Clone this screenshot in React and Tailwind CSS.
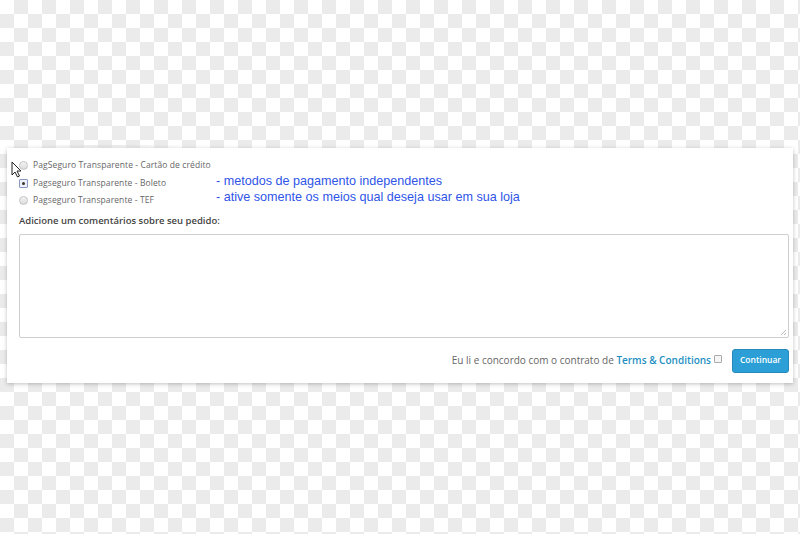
import React from 'react';

// Linhas de pagamento
const methods = [
  { label: 'PagSeguro Transparente - Cartão de crédito', checked: false },
  { label: 'Pagseguro Transparente - Boleto', checked: true },
  { label: 'Pagseguro Transparente - TEF', checked: false },
];

// Fundo quadriculado (padrão de transparência), 14px por casa
const COLS = 58;
const ROWS = 39;
const cells = [...Array(COLS * ROWS)].map((_, i) => (Math.floor(i / COLS) + (i % COLS)) % 2 === 1);

const Checker = () => (
  <div className="absolute inset-0 grid grid-cols-[repeat(58,14px)] auto-rows-[14px]">
    {cells.map((gray, i) => (
      <div key={i} className={gray ? 'bg-[#ebebeb]' : 'bg-white'}></div>
    ))}
  </div>
);

const Radio = ({ checked }) =>
  checked ? (
    <span className="w-[9px] h-[9px] border border-[#8a98c8] bg-[#eef0f8] rounded-[1px] flex items-center justify-center shrink-0">
      <span className="w-[3px] h-[3px] bg-[#333] rounded-full"></span>
    </span>
  ) : (
    <span className="w-[9px] h-[9px] rounded-full border border-[#c4c4c4] bg-gradient-to-b from-[#f4f4f4] to-[#dcdcdc] shrink-0"></span>
  );

const Cursor = () => (
  <svg className="absolute left-[11px] top-[161px]" width="11" height="17" viewBox="0 0 11 17">
    <path d="M1 1 L1 14 L4 11 L6.5 16 L8.5 15 L6 10 L10 10 Z" fill="#fff" stroke="#222" strokeWidth="1" strokeLinejoin="round" />
  </svg>
);

export default function App() {
  return (
    <div
      className="relative w-full h-[534px] overflow-hidden bg-white"
      style={{ fontFamily: '"Open Sans", "DejaVu Sans", sans-serif' }}>
      <Checker />

      {/* Card do checkout */}
      <div className="absolute left-[7px] top-[148px] w-[786px] h-[235px] bg-white shadow-[0_1px_4px_rgba(0,0,0,0.25)] pl-[12px] pr-[4px] pt-[9px]">
        {/* Restos da linha anterior cortada */}
        <div className="absolute left-[25px] -top-[3px] w-[150px] h-[3px] bg-gradient-to-r from-transparent via-[#dedede] to-transparent opacity-70"></div>

        <div className="flex flex-col">
          {methods.map(m => (
            <div key={m.label} className="flex items-center gap-[5px] h-[17.5px]">
              <Radio checked={m.checked} />
              <span className="text-[8.5px] text-[#666] tracking-[0.1px]">{m.label}</span>
            </div>
          ))}
        </div>

        <div className="mt-[4px] text-[9.5px] font-semibold text-[#444]">Adicione um comentários sobre seu pedido:</div>

        <div className="relative mt-[6px] h-[104px] border border-[#cfcfcf] rounded-[2px] bg-white">
          <svg className="absolute right-[1px] bottom-[1px]" width="7" height="7" viewBox="0 0 7 7">
            <path d="M6 1 L1 6 M6 4 L4 6" stroke="#aaa" strokeWidth="0.8" />
          </svg>
        </div>

        <div className="flex items-center justify-end mt-[11px]">
          <span className="text-[10px] text-[#666]">
            Eu li e concordo com o contrato de{' '}
            <span className="text-[#1e8fc2] font-semibold">Terms &amp; Conditions</span>
          </span>
          <span className="ml-[3px] mb-[4px] w-[8px] h-[8px] border border-[#aaa] rounded-[1px] bg-[#f6f6f6]"></span>
          <button className="ml-[10px] w-[57px] h-[24px] rounded-[3px] bg-[#2b9fd6] border border-[#2489bb] text-white text-[8.5px] font-semibold">
            Continuar
          </button>
        </div>
      </div>

      {/* Anotação em azul */}
      <div
        className="absolute left-[216px] top-[174px] text-[12.6px] leading-[15.5px] text-[#2f55e8]"
        style={{ fontFamily: '"Liberation Sans", Arial, sans-serif' }}>
        <div>- metodos de pagamento independentes</div>
        <div>- ative somente os meios qual deseja usar em sua loja</div>
      </div>

      <Cursor />
    </div>
  );
}
